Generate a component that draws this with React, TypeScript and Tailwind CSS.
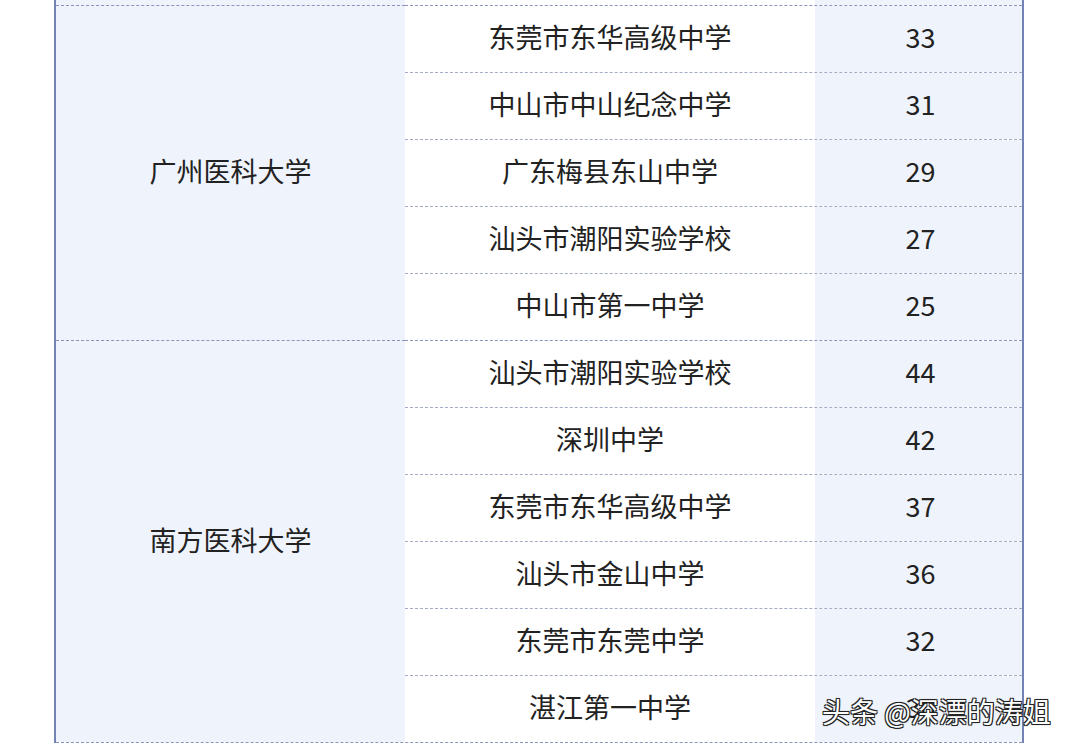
const groups = [
  {
    name: "广州医科大学",
    rows: [
      ["东莞市东华高级中学", "33"],
      ["中山市中山纪念中学", "31"],
      ["广东梅县东山中学", "29"],
      ["汕头市潮阳实验学校", "27"],
      ["中山市第一中学", "25"],
    ],
  },
  {
    name: "南方医科大学",
    rows: [
      ["汕头市潮阳实验学校", "44"],
      ["深圳中学", "42"],
      ["东莞市东华高级中学", "37"],
      ["汕头市金山中学", "36"],
      ["东莞市东莞中学", "32"],
      ["湛江第一中学", "30"],
    ],
  },
];

export default function App() {
  return (
    <div className="relative h-[747px] w-full overflow-hidden bg-white font-['Noto_Sans_CJK_SC','Noto_Sans',sans-serif] text-[27px] text-[#222]">
      <div className="ml-[54px] flex w-[970px] flex-col border-x-2 border-[#7483b6]">
        {/* top strip of previous row */}
        <div className="flex h-[5px]">
          <div className="w-[349px] bg-[#eff3fc]" />
          <div className="w-[410px] bg-white" />
          <div className="flex-1 bg-[#eff3fc]" />
        </div>

        {groups.map((g, gi) => (
          <div
            key={g.name}
            className={`flex ${gi === groups.length - 1 ? "border-b border-dashed border-[#8a94bf]" : ""}`}
          >
            <div className="flex w-[349px] items-center justify-center border-t border-dashed border-[#8a94bf] bg-[#eff3fc] pb-[3px]">
              {g.name}
            </div>
            <div className="flex flex-1 flex-col">
              {g.rows.map(([school, n], i) => (
                <div
                  key={i}
                  className={`box-border flex h-[67px] border-t border-dashed ${i === 0 ? "border-[#8a94bf]" : "border-[#a4abc4]"}`}
                >
                  <div className="flex w-[410px] items-center justify-center bg-white pb-[3px]">{school}</div>
                  <div className="flex flex-1 items-center justify-center bg-[#eff3fc] pb-[3px] pl-[4px]">{n}</div>
                </div>
              ))}
            </div>
          </div>
        ))}
      </div>

      {/* watermark */}
      <div className="absolute left-[822px] top-[690px] whitespace-nowrap text-[28px] text-white [text-shadow:1px_1px_0_#222,-1px_-1px_0_#222,1px_-1px_0_#222,-1px_1px_0_#222,0_0_2px_#000]">
        头条 @深漂的涛姐
      </div>
    </div>
  );
}
